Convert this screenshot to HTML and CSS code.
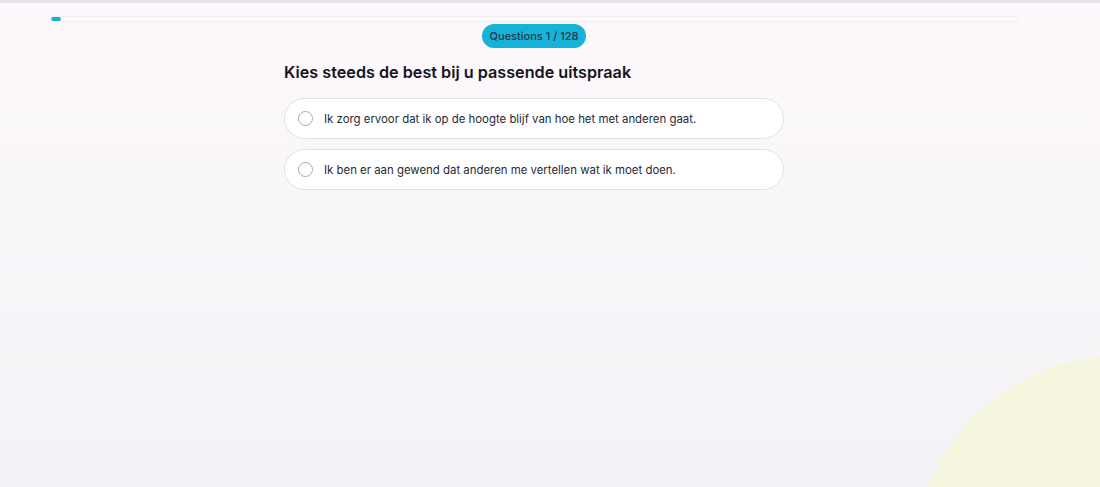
FILE: index.html
```html
<!DOCTYPE html>
<html lang="nl">
<head>
    <meta charset="UTF-8">
    <meta name="viewport" content="width=device-width, initial-scale=1.0">
    <title>Vragenlijst</title>
    <link rel="stylesheet" href="styles.css">
</head>
<body>
    <div class="topline"></div>
    <div class="progress">
        <div class="progress-fill" style="width: 1%"></div>
    </div>
    <div class="counter">Questions 1 / 128</div>
    <main class="question">
        <h2 class="question-title">Kies steeds de best bij u passende uitspraak</h2>
        <label class="option">
            <input type="radio" name="q1" value="a">
            <span class="radio"></span>
            <span class="option-text">Ik zorg ervoor dat ik op de hoogte blijf van hoe het met anderen gaat.</span>
        </label>
        <label class="option">
            <input type="radio" name="q1" value="b">
            <span class="radio"></span>
            <span class="option-text">Ik ben er aan gewend dat anderen me vertellen wat ik moet doen.</span>
        </label>
    </main>
</body>
</html>
```

FILE: styles.css
```css
* { box-sizing: border-box; margin: 0; padding: 0; }
html, body { height: 100%; }
body {
    font-family: "Inter", "Noto Sans", sans-serif;
    /* yellow circle peeking in bottom right */
    background:
        radial-gradient(circle at 1118px 560px, #f6f5dd 203px, rgba(246,245,221,0) 204px),
        linear-gradient(180deg, #fdf8fc 0%, #f8f6f9 50%, #f3f2f6 100%);
    color: #1c1c2b;
    overflow: hidden;
}
.topline { height: 3px; background: #e4e3e8; }
.progress {
    margin: 13px 81px 0 50px; height: 6px;
    border: 1px solid #efecf0; border-radius: 4px; background: #fdfafd;
    overflow: hidden;
}
.progress-fill { height: 100%; background: #14b0d6; border-radius: 4px; min-width: 10px; }
.counter {
    width: 104px; height: 24px; margin: 2px auto 0; border-radius: 12px;
    background: #16b2d7; color: #23364a; font-size: 11px; font-weight: 500;
    display: flex; align-items: center; justify-content: center;
    position: relative; left: -16px;
}
.question { width: 500px; margin: 14px auto 0; position: relative; left: -16px; }
.question-title { font-size: 16.2px; font-weight: 600; color: #15151f; margin-bottom: 16px; }
.option {
    display: flex; align-items: center; height: 41px; margin-bottom: 10px;
    padding: 0 13px; background: #fff; border: 1px solid #e2e0e4; border-radius: 21px;
    cursor: pointer; font-size: 11.4px; color: #1f2a36;
}
.option input { display: none; }
.radio {
    width: 15px; height: 15px; border-radius: 50%; border: 1.5px solid #a9a9ad;
    margin-right: 11px; flex-shrink: 0;
}
.option input:checked + .radio { border: 4px solid #14b0d6; }
```
